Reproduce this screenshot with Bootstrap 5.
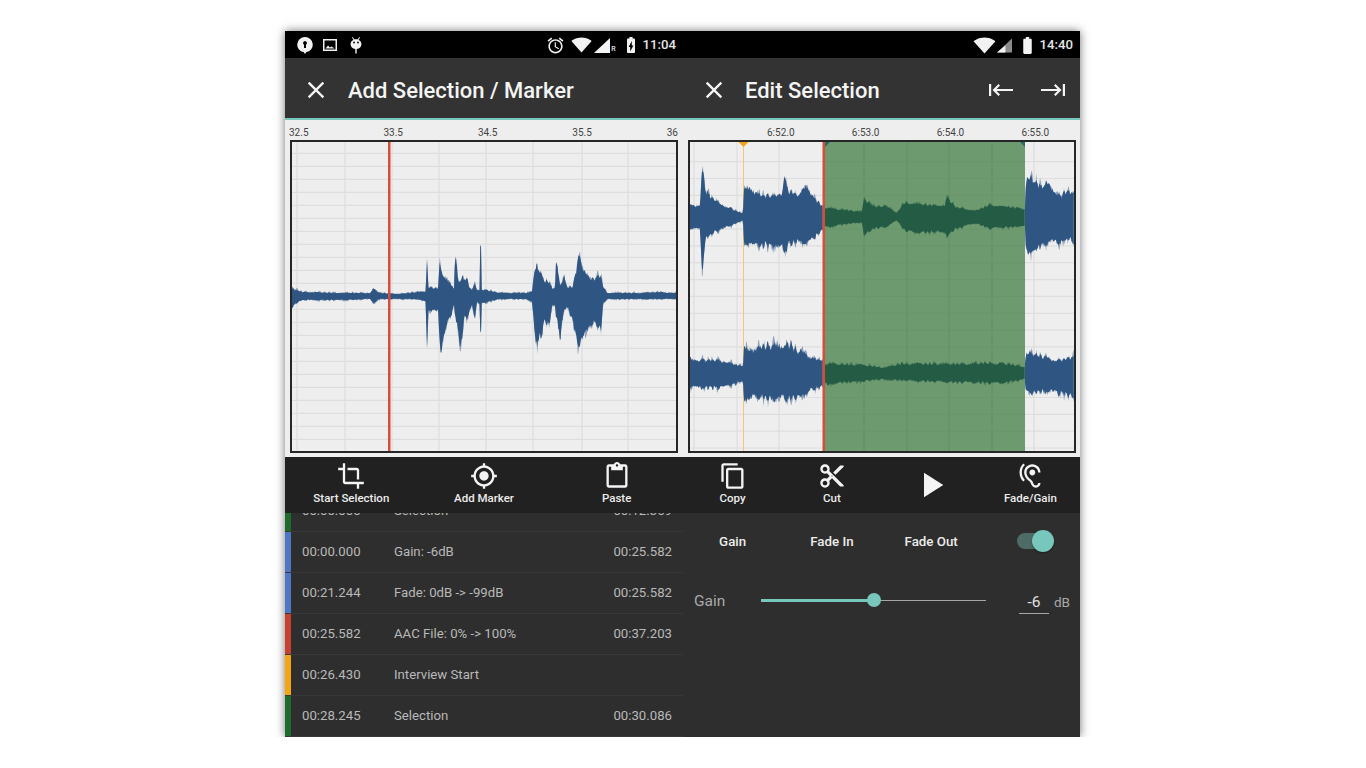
<!DOCTYPE html>
<html lang="en">
  <head>
    <meta charset="UTF-8" />
    <meta name="viewport" content="width=device-width, initial-scale=1.0" />
    <title>Add Selection / Edit Selection</title>
    <link href="https://cdn.jsdelivr.net/npm/bootstrap@5.3.3/dist/css/bootstrap.min.css" rel="stylesheet" />
    <style>
      body { background: #fff; overflow: hidden; font-family: Roboto, "Liberation Sans", sans-serif; }
      .app-frame { width: 795px; height: 706px; margin: 31px 0 0 285px; box-shadow: 0 0 9px rgba(0, 0, 0, .55); }
      .pane-left { width: 398px; }
      .pane-right { width: 397px; }
      .status-strip { height: 27px; padding-top: 1px; background: #000; color: #e4e4e4; font-size: 13.2px; font-weight: 500; }
      .status-strip svg { display: block; fill: #f2f2f2; }
      .title-strip { height: 62px; padding-top: 3px; background: #333; border-bottom: 2px solid #78c7bc; color: #f4f4f4; }
      .title-strip h1 { font-size: 22px; font-weight: 500; margin: 0; padding-top: 3px; }
      .title-strip svg { display: block; fill: #f4f4f4; }
      .wave-area { height: 337px; background: #eee; }
      .tick-row { height: 20px; font-size: 10px; color: #444; line-height: 25px; }
      .tick-row-right { padding-left: 84px; gap: 57.3px; }
      .wave-box { height: 313px; border: 2px solid #262626; background: #eee; }
      .wave-box svg { display: block; width: 100%; height: 100%; }
      .action-strip { height: 56px; background: #212121; color: #ececec; font-size: 11.5px; font-weight: 500; }
      .action-strip svg { display: block; margin: 5px auto 0; fill: #f4f4f4; }
      .action-label { line-height: 16px; }
      .action-strip .play-svg { margin-top: 7px; }
      .lower-panel { height: 224px; background: #2e2e2e; overflow: hidden; }
      .cue-list { margin-top: -22px; }
      .cue-row { height: 41px; border-bottom: 1px solid #383838; color: #b9b9b9; font-size: 13.2px; }
      .cue-swatch { width: 6px; height: 40px; margin-right: 11px; }
      .cue-start { width: 92px; }
      .cue-end { margin-right: 11px; }
      .swatch-green { background: #1f6a2c; }
      .swatch-blue { background: #4f77c6; }
      .swatch-red { background: #c8402f; }
      .swatch-orange { background: #f3a512; }
      .fade-tabs { height: 56px; padding-top: 1px; color: #ececec; font-size: 13.3px; font-weight: 500; }
      .fade-switch { width: 26px; height: 16px; margin: 0 0 2px 36px; border-radius: 8px; background: #4f6b67; position: relative; }
      .fade-switch::after { content: ""; position: absolute; left: 15px; top: -3px; width: 22px; height: 22px; border-radius: 50%; background: #78c7bc; box-shadow: 0 1px 2px rgba(0, 0, 0, .4); }
      .gain-row { height: 32px; margin-top: 16px; padding-left: 11px; color: #a9a9a9; font-size: 15.5px; }
      .gain-name { width: 67px; padding-top: 2px; }
      .gain-slider { width: 225px; height: 1px; margin-top: -1px; background: #a5a5a5; position: relative; }
      .gain-fill { position: absolute; left: 0; top: -1px; height: 3px; background: #78c7bc; }
      .gain-knob { position: absolute; top: -7px; width: 14px; height: 14px; margin-left: -7px; border-radius: 50%; background: #78c7bc; }
      .gain-value { width: 30px; height: 25px; line-height: 26px; margin: 0 0 0 33px; border-bottom: 1px solid #a5a5a5; color: #e0e0e0; text-align: center; }
      .gain-unit { margin: 2px 0 0 5px; font-size: 13.5px; }
    </style>
  </head>
  <body>
    <div class="app-frame d-flex">
      <!-- LEFT: add selection -->
      <div class="pane-left">
        <div class="status-strip d-flex align-items-center">
          <svg width="18" height="18" viewBox="0 0 18 18" style="margin-left:11px"><path d="M9 1a7.600 7.600 0 0 0-1.400 15.100L9 18l1.400-1.900A7.600 7.600 0 0 0 9 1z"/><path d="M9 5a2 2 0 0 0-1 3.700V12h2V8.700A2 2 0 0 0 9 5z" fill="#000"/></svg>
          <svg width="14" height="14" viewBox="0 0 14 14" style="margin-left:9px"><path d="M0 1h14v12H0zM1.500 2.500v9h11v-9z"/><path d="M2.500 10.500l2.500-3 2 2 1.500-1 3 2z"/></svg>
          <svg width="14" height="18" viewBox="0 0 14 18" style="margin-left:12px"><path d="M3.500 1l1.800 2.200h3.400L10.500 1l.6.500-1.500 2.200A5 5 0 0 1 12.500 8a5.500 5.500 0 0 1-4.800 5v4.500H6.300V13A5.500 5.500 0 0 1 1.500 8a5 5 0 0 1 2.900-4.300L2.900 1.500z"/><circle cx="5" cy="6.500" r=".9" fill="#000"/><circle cx="9" cy="6.500" r=".9" fill="#000"/></svg>
          <svg width="19" height="19" viewBox="0 0 24 24" style="margin-left:auto"><path d="M22 5.720l-4.600-3.860-1.290 1.530 4.600 3.860L22 5.720zM7.880 3.390L6.600 1.860 2 5.710l1.290 1.530 4.590-3.850zM12.500 8H11v6l4.750 2.850.75-1.230-4-2.370V8zM12 4c-4.970 0-9 4.030-9 9s4.020 9 9 9c4.970 0 9-4.030 9-9s-4.030-9-9-9zm0 16c-3.870 0-7-3.130-7-7s3.130-7 7-7 7 3.130 7 7-3.130 7-7 7z"/></svg>
          <svg width="21" height="16" viewBox="0 0 24 18" style="margin-left:6px"><path d="M12 17.500L23.600 4.500C23 4 18.700.500 12 .500S1 4 .400 4.500z"/></svg>
          <svg width="16" height="15" viewBox="0 0 16 15" style="margin-left:2px"><path d="M0 15h16V0z"/></svg>
          <span style="font-size:7px;line-height:7px;margin:8px 0 0 1px">R</span>
          <svg width="12" height="16" viewBox="7 2 10 20" style="margin-left:9px"><path d="M15.670 4H14V2h-4v2H8.330C7.600 4 7 4.600 7 5.330v15.330C7 21.400 7.600 22 8.330 22h7.330c.74 0 1.340-.6 1.340-1.330V5.330C17 4.600 16.400 4 15.670 4zM11 20v-5.500H9L13 7v5.500h2L11 20z"/></svg>
          <span style="margin:0 7px 0 6px">11:04</span>
        </div>
        <div class="title-strip d-flex align-items-center">
          <svg width="28" height="28" viewBox="0 0 24 24" style="margin-left:17px"><path d="M19 6.410L17.590 5 12 10.590 6.410 5 5 6.410 10.590 12 5 17.590 6.410 19 12 13.410 17.590 19 19 17.590 13.410 12z"/></svg>
          <h1 style="margin-left:18px">Add Selection / Marker</h1>
        </div>
        <div class="wave-area px-1" style="padding-right:5px !important">
          <div class="tick-row d-flex justify-content-between"><span>32.5</span><span>33.5</span><span>34.5</span><span>35.5</span><span>36</span></div>
          <div class="wave-box" style="margin-left:1px"><svg id="wave-left" viewBox="292 142 384 309" preserveAspectRatio="none"></svg></div>
        </div>
        <div class="action-strip row g-0 text-center">
          <div class="col-4">
            <svg width="28" height="28" viewBox="0 0 24 24"><path d="M17 15h2V7c0-1.100-.9-2-2-2H9v2h8v8zM7 17V1H5v4H1v2h4v10c0 1.100.9 2 2 2h10v4h2v-4h4v-2H7z"/></svg>
            <div class="action-label">Start Selection</div>
          </div>
          <div class="col-4">
            <svg width="28" height="28" viewBox="0 0 24 24"><path d="M12 8c-2.210 0-4 1.790-4 4s1.790 4 4 4 4-1.790 4-4-1.790-4-4-4zm8.940 3c-.46-4.170-3.770-7.480-7.940-7.940V1h-2v2.060C6.830 3.520 3.520 6.830 3.060 11H1v2h2.060c.46 4.170 3.770 7.480 7.940 7.940V23h2v-2.060c4.170-.46 7.480-3.770 7.940-7.940H23v-2h-2.060zM12 19c-3.870 0-7-3.130-7-7s3.130-7 7-7 7 3.130 7 7-3.130 7-7 7z"/></svg>
            <div class="action-label">Add Marker</div>
          </div>
          <div class="col-4">
            <svg width="28" height="28" viewBox="0 0 24 24"><path d="M19 2h-4.180C14.400.84 13.300 0 12 0c-1.300 0-2.400.84-2.820 2H5c-1.100 0-2 .9-2 2v16c0 1.100.9 2 2 2h14c1.100 0 2-.9 2-2V4c0-1.100-.9-2-2-2zm-7 0c.55 0 1 .45 1 1s-.45 1-1 1-1-.45-1-1 .45-1 1-1zm7 18H5V4h2v3h10V4h2v16z"/></svg>
            <div class="action-label">Paste</div>
          </div>
        </div>
        <div class="lower-panel">
          <div class="cue-list" id="cue-list"></div>
        </div>
      </div>
      <!-- RIGHT: edit selection -->
      <div class="pane-right">
        <div class="status-strip d-flex align-items-center justify-content-end">
          <svg width="23" height="17" viewBox="0 0 24 18"><path d="M12 17.500L23.600 4.500C23 4 18.700.500 12 .500S1 4 .400 4.500z"/></svg>
          <svg width="15" height="15" viewBox="0 0 16 15" style="margin-left:1px"><path d="M0 15h16V0z" fill="#8c8c8c"/><path d="M0 15h9V7.500z"/></svg>
          <svg width="11" height="17" viewBox="7 2 10 20" style="margin-left:10px"><path d="M15.670 4H14V2h-4v2H8.330C7.600 4 7 4.600 7 5.330v15.330C7 21.400 7.600 22 8.330 22h7.330c.74 0 1.340-.6 1.340-1.330V5.330C17 4.600 16.400 4 15.670 4z"/></svg>
          <span style="margin:0 7px 0 7px">14:40</span>
        </div>
        <div class="title-strip d-flex align-items-center">
          <svg width="28" height="28" viewBox="0 0 24 24" style="margin-left:17px"><path d="M19 6.410L17.590 5 12 10.590 6.410 5 5 6.410 10.590 12 5 17.590 6.410 19 12 13.410 17.590 19 19 17.590 13.410 12z"/></svg>
          <h1 style="margin-left:17px">Edit Selection</h1>
          <svg class="ms-auto" width="26" height="14" viewBox="0 0 26 14"><path d="M1 1v12h2.200V1zM10.500 1L4.500 7l6 6 1.500-1.500-3.400-3.400H25V5.900H8.600L12 2.500z"/></svg>
          <svg width="26" height="14" viewBox="0 0 26 14" style="margin:0 14px 0 26px"><path d="M25 1v12h-2.200V1zM15.500 1L21.500 7l-6 6-1.500-1.500 3.400-3.400H1V5.900h16.400L14 2.500z"/></svg>
        </div>
        <div class="wave-area">
          <div class="tick-row tick-row-right d-flex"><span>6:52.0</span><span>6:53.0</span><span>6:54.0</span><span>6:55.0</span></div>
          <div class="wave-box" style="margin:0 4px 0 5px"><svg id="wave-right" viewBox="690 142 384 309" preserveAspectRatio="none"></svg></div>
        </div>
        <div class="action-strip row g-0 text-center">
          <div class="col-3">
            <svg width="28" height="28" viewBox="0 0 24 24"><path d="M16 1H4c-1.100 0-2 .9-2 2v14h2V3h12V1zm3 4H8c-1.100 0-2 .9-2 2v14c0 1.100.9 2 2 2h11c1.100 0 2-.9 2-2V7c0-1.100-.9-2-2-2zm0 16H8V7h11v14z"/></svg>
            <div class="action-label">Copy</div>
          </div>
          <div class="col-3">
            <svg width="28" height="28" viewBox="0 0 24 24"><path d="M9.640 7.640c.23-.5.36-1.050.36-1.640 0-2.210-1.790-4-4-4S2 3.790 2 6s1.790 4 4 4c.59 0 1.140-.13 1.640-.36L10 12l-2.360 2.360C7.140 14.130 6.590 14 6 14c-2.210 0-4 1.790-4 4s1.790 4 4 4 4-1.790 4-4c0-.59-.13-1.140-.36-1.640L12 14l7 7h3v-1L9.640 7.640zM6 8c-1.100 0-2-.89-2-2s.9-2 2-2 2 .89 2 2-.9 2-2 2zm0 12c-1.100 0-2-.89-2-2s.9-2 2-2 2 .89 2 2-.9 2-2 2zm6-7.500c-.28 0-.5-.22-.5-.5s.22-.5.5-.5.5.22.5.5-.22.5-.5.5zM19 3l-6 6 2 2 7-7V3z"/></svg>
            <div class="action-label">Cut</div>
          </div>
          <div class="col-3">
            <svg class="play-svg" width="42" height="42" viewBox="0 0 24 24"><path d="M8 5v14l11-7z"/></svg>
          </div>
          <div class="col-3">
            <svg width="28" height="28" viewBox="0 0 24 24"><path d="M17 20c-.29 0-.56-.06-.76-.15-.71-.37-1.210-.88-1.710-2.380-.51-1.560-1.470-2.290-2.390-3-.79-.61-1.610-1.240-2.320-2.530C9.290 10.980 9 9.930 9 9c0-2.800 2.200-5 5-5s5 2.200 5 5h2c0-3.930-3.070-7-7-7S7 5.070 7 9c0 1.260.38 2.650 1.070 3.900.91 1.650 1.980 2.480 2.850 3.150.81.62 1.390 1.070 1.710 2.050.6 1.820 1.370 2.840 2.730 3.550.51.23 1.070.35 1.640.35 2.210 0 4-1.790 4-4h-2c0 1.100-.9 2-2 2zM7.640 2.640L6.220 1.220C4.230 3.210 3 5.960 3 9s1.230 5.790 3.220 7.780l1.410-1.410C6.010 13.740 5 11.490 5 9s1.010-4.740 2.640-6.360zM11.500 9c0 1.380 1.120 2.500 2.500 2.500s2.500-1.120 2.500-2.500-1.120-2.500-2.500-2.500-2.500 1.120-2.500 2.500z"/></svg>
            <div class="action-label">Fade/Gain</div>
          </div>
        </div>
        <div class="lower-panel">
          <div class="fade-tabs row g-0 text-center align-items-center">
            <div class="col-3">Gain</div>
            <div class="col-3">Fade In</div>
            <div class="col-3">Fade Out</div>
            <div class="col-3"><div class="fade-switch"></div></div>
          </div>
          <div class="gain-row d-flex align-items-center">
            <div class="gain-name">Gain</div>
            <div class="gain-slider">
              <div class="gain-fill" style="width:113px"></div>
              <div class="gain-knob" style="left:113px"></div>
            </div>
            <div class="gain-value">-6</div>
            <div class="gain-unit">dB</div>
          </div>
        </div>
      </div>
    </div>

    <script>
      // ---------- CUE LIST ----------
      const cues = [
        ["green", "00:00.000", "Selection", "00:12.369"],
        ["blue", "00:00.000", "Gain: -6dB", "00:25.582"],
        ["blue", "00:21.244", "Fade: 0dB -> -99dB", "00:25.582"],
        ["red", "00:25.582", "AAC File: 0% -> 100%", "00:37.203"],
        ["orange", "00:26.430", "Interview Start", ""],
        ["green", "00:28.245", "Selection", "00:30.086"],
      ];
      document.getElementById("cue-list").innerHTML = cues.map(([c, a, b, e]) => `
        <div class="cue-row d-flex align-items-center">
          <div class="cue-swatch swatch-${c}"></div>
          <div class="cue-start">${a}</div>
          <div>${b.replace(/>/g, "&gt;")}</div>
          <div class="cue-end ms-auto">${e}</div>
        </div>`).join("");

      // ---------- WAVEFORMS ----------
      // envelopes are [x, up, down] in page pixels, measured off the reference
      const BLUE = "#2f5583", DARK = "#235b45";
      let seed = 7;
      const rnd = () => (seed = (seed * 16807) % 2147483647) / 2147483647;

      function level(env, x) {
        for (let i = 1; i < env.length; i++) {
          if (x <= env[i][0]) {
            const a = env[i - 1], b = env[i];
            const t = b[0] === a[0] ? 1 : (x - a[0]) / (b[0] - a[0]);
            return [a[1] + (b[1] - a[1]) * t, a[2] + (b[2] - a[2]) * t];
          }
        }
        const l = env[env.length - 1];
        return [l[1], l[2]];
      }

      function wavePath(env, cy, jitter, extra) {
        const x0 = env[0][0], x1 = env[env.length - 1][0];
        const top = [], bot = [];
        for (let x = x0; x <= x1; x += 0.75) {
          const [u, d] = level(env, x);
          // slow wobble so the edge isn't just fine hair
          const w = 1 + 0.5 * jitter * Math.sin(x * 0.9 + Math.sin(x * 0.23) * 3);
          top.push(`${x},${(cy - u * w * (1 - jitter / 2 + rnd() * jitter) - extra * rnd()).toFixed(1)}`);
          bot.unshift(`${x},${(cy + d * w * (1 - jitter / 2 + rnd() * jitter) + extra * rnd()).toFixed(1)}`);
        }
        return "M" + top.concat(bot).join("L") + "Z";
      }

      function wave(env, cy, color, jitter) {
        return `<path d="${wavePath(env, cy, jitter * 1.3, 1)}" fill="${color}" opacity=".5"/>` +
          `<path d="${wavePath(env, cy, jitter * .8, 0)}" fill="${color}"/>`;
      }

      function grid(xs, y0, dy, x0, x1) {
        let s = "";
        xs.forEach((x) => (s += `<path d="M${x} 142V451" stroke="#dedede" stroke-width="1.2"/>`));
        for (let y = y0; y < 451; y += dy) s += `<path d="M${x0} ${y.toFixed(1)}H${x1}" stroke="#dedede" stroke-width="1.2"/>`;
        return s;
      }

      const leftEnv = [[292, 8, 12], [296, 6, 7], [302, 4, 4], [340, 3, 4], [370, 3, 3], [373, 7, 7], [380, 3, 3], [400, 2, 3], [418, 4, 3], [426, 5, 6], [426.5, 38, 60], [427.5, 38, 60], [428, 8, 14], [438, 8, 14], [439.5, 30, 42], [441.5, 29, 63], [444, 17, 34], [448, 15, 24], [451, 12, 22], [454, 8, 9], [455, 42, 22], [456.5, 40, 28], [458, 12, 30], [460.5, 15, 58], [462, 20, 45], [464, 16, 20], [467, 17, 22], [469, 10, 18], [472, 6, 8], [475, 12, 22], [477, 5, 5], [479.5, 6, 8], [480, 56, 36], [481, 56, 36], [481.5, 7, 8], [490, 5, 5], [500, 3, 3], [525, 3, 3], [532, 4, 5], [534, 20, 26], [537, 32, 53], [540, 24, 42], [545, 14, 25], [549, 14, 30], [552, 8, 10], [555, 8, 10], [556, 32, 20], [557.5, 26, 22], [560, 10, 42], [562, 12, 25], [564, 20, 14], [568, 8, 12], [573, 10, 25], [577, 30, 45], [580, 40, 52], [583, 28, 42], [590, 15, 25], [597, 20, 30], [601, 20, 33], [603, 10, 8], [607, 3, 3], [640, 3, 3], [660, 4, 3], [676, 3, 3]];

      document.getElementById("wave-left").innerHTML =
        grid([297, 345, 392, 439, 486, 533, 582, 628], 153.3, 13, 292, 676) +
        wave(leftEnv, 296, BLUE, .22) +
        `<rect x="388" y="142" width="2.500" height="309" fill="#d94c39"/>`;

      const ch1a = [[690, 12, 12], [700, 12, 12], [702, 46, 52], [706, 26, 20], [715, 16, 15], [725, 11, 11], [741, 4, 4], [743, 4, 4], [744, 27, 25], [750, 29, 28], [760, 22, 28], [775, 20, 28], [782, 24, 30], [784, 42, 40], [788, 25, 27], [800, 22, 24], [807, 30, 26], [815, 18, 20], [823, 10, 12]];
      const ch1b = [[825, 9, 10], [845, 7, 7], [862, 5, 5], [864, 18, 18], [875, 10, 11], [885, 11, 10], [897, 4, 3], [904, 14, 13], [915, 13, 15], [945, 11, 15], [947, 20, 19], [955, 10, 12], [975, 6, 6], [990, 12, 11], [1025, 8, 9]];
      const ch1c = [[1025, 10, 10], [1026, 40, 38], [1040, 32, 30], [1050, 32, 25], [1060, 20, 26], [1068, 27, 22], [1074, 22, 25]];
      const ch2a = [[690, 14, 15], [725, 12, 14], [740, 7, 9], [743, 8, 9], [744, 23, 25], [765, 27, 25], [790, 28, 26], [805, 18, 20], [823, 12, 13]];
      const ch2b = [[825, 9, 11], [860, 8, 8], [885, 5, 6], [900, 9, 7], [960, 9, 9], [1000, 10, 10], [1025, 6, 6]];
      const ch2c = [[1025, 10, 10], [1026, 21, 20], [1040, 17, 18], [1060, 12, 20], [1074, 17, 24]];

      document.getElementById("wave-right").innerHTML =
        grid([694, 737, 779, 864, 907, 949, 992, 1034], 161.7, 16.84, 690, 1074) +
        `<rect x="825" y="142" width="200" height="309" fill="#6e9a70"/>` +
        [864, 907, 949, 992].map((x) => `<path d="M${x} 142V451" stroke="#64906a" stroke-width="1.200"/>`).join("") +
        Array.from({ length: 17 }, (_, i) => `<path d="M825 ${(161.7 + i * 16.84).toFixed(1)}H1025" stroke="#6a956d" stroke-width="1"/>`).join("") +
        `<path d="M743.500 142V451" stroke="#f8c66c" stroke-width="1"/>` +
        wave(ch1a, 217, BLUE, .2) + wave(ch1b, 217, DARK, .16) + wave(ch1c, 217, BLUE, .2) +
        wave(ch2a, 373, BLUE, .26) + wave(ch2b, 373, DARK, .24) + wave(ch2c, 373, BLUE, .24) +
        `<path d="M738.500 142h10l-5 5z" fill="#f2a31c"/>` +
        `<path d="M825 142h5l-5 5zM1025 142h-5l5 5z" fill="#2c6a66"/>` +
        `<rect x="822.500" y="142" width="2.500" height="309" fill="#d94c39"/>`;
    </script>
    <script src="https://cdn.jsdelivr.net/npm/bootstrap@5.3.3/dist/js/bootstrap.bundle.min.js"></script>
  </body>
</html>
